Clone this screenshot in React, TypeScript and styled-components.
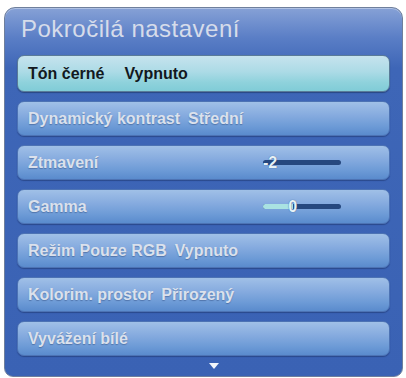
import React from 'react';
import styled, { createGlobalStyle, css } from 'styled-components';

type Item = {
  label: string;
  value?: string;
  gap?: number;
  slider?: { text: string; pos: number; fill: boolean };
};

const items: Item[] = [
  { label: 'Tón černé', value: 'Vypnuto', gap: 20 },
  { label: 'Dynamický kontrast', value: 'Střední', gap: 8 },
  { label: 'Ztmavení', slider: { text: '-2', pos: 9, fill: false } },
  { label: 'Gamma', slider: { text: '0', pos: 38, fill: true } },
  { label: 'Režim Pouze RGB', value: 'Vypnuto', gap: 8 },
  { label: 'Kolorim. prostor', value: 'Přirozený', gap: 8 },
  { label: 'Vyvážení bílé' },
];

const App: React.FC = () => {
  return (
    <>
      <GlobalStyle />
      <Page>
        <Panel>
          <Title>Pokročilá nastavení</Title>
          <List>
            {items.map((item, i) => (
              <Row key={item.label} $active={i === 0}>
                <Label>{item.label}</Label>
                {item.value && <Value style={{ marginLeft: item.gap }}>{item.value}</Value>}
                {item.slider && (
                  <Slider>
                    <Track>
                      {item.slider.fill && <Fill style={{ width: `${item.slider.pos}%` }} />}
                    </Track>
                    <Knob style={{ left: `${item.slider.pos}%` }}>{item.slider.text}</Knob>
                  </Slider>
                )}
              </Row>
            ))}
          </List>
          <More>
            <Arrow />
          </More>
        </Panel>
      </Page>
    </>
  );
};

const GlobalStyle = createGlobalStyle`
  html, body {
    margin: 0;
    background: #ffffff;
  }
  body {
    font-family: "Liberation Sans", Arial, sans-serif;
  }
`;

const Page = styled.div`
  padding: 7px 0 0 4px;
`;

const Panel = styled.div`
  box-sizing: border-box;
  width: 399px;
  height: 370px;
  border: 1px solid #6f7f9c;
  border-radius: 11px 11px 9px 9px;
  background: linear-gradient(180deg, #86a1d6 0px, #5a7ec6 30px, #3e66b7 60px, #3a62b4 100%);
  box-shadow: inset 0 1px 0 rgba(255, 255, 255, 0.35);
  display: flex;
  flex-direction: column;
`;

const Title = styled.div`
  padding: 7px 0 0 16px;
  margin-bottom: 12px;
  font-size: 24px;
  line-height: 28px;
  letter-spacing: 0.5px;
  color: #d6dcea;
  white-space: nowrap;
`;

const List = styled.div`
  display: flex;
  flex-direction: column;
  gap: 9px;
  padding: 0 12px;
`;

const activeRow = css`
  height: 37px;
  color: #121820;
  background: linear-gradient(180deg, #c6e3ee 0%, #acdbe6 45%, #8fd2dc 75%, #80ccd7 100%);
  border: 1px solid #5a7b98;
  box-shadow: 0 1px 1px rgba(20, 40, 80, 0.5);
`;

const normalRow = css`
  height: 35px;
  color: #dbe1ec;
  text-shadow: 0 1px 1px rgba(20, 40, 90, 0.35);
  background: linear-gradient(180deg, #a0c0e7 0%, #86abdf 40%, #6c9ad6 75%, #5a8bcd 100%);
  border: 1px solid #4d73b4;
  box-shadow: 0 1px 1px rgba(20, 40, 90, 0.45);
`;

const Row = styled.div<{ $active?: boolean }>`
  box-sizing: border-box;
  display: flex;
  align-items: center;
  padding: 0 10px;
  border-radius: 7px;
  font-size: 16px;
  font-weight: 700;
  white-space: nowrap;
  ${({ $active }) => ($active ? activeRow : normalRow)}
`;

const Label = styled.span``;

const Value = styled.span``;

const Slider = styled.div`
  position: relative;
  width: 78px;
  height: 5px;
  margin-left: auto;
  margin-right: 38px;
`;

const Track = styled.div`
  height: 5px;
  border-radius: 3px;
  background: #26487f;
  overflow: hidden;
`;

const Fill = styled.div`
  height: 100%;
  background: #a9e2e2;
`;

const Knob = styled.span`
  position: absolute;
  top: 50%;
  transform: translate(-50%, -50%);
  font-size: 16px;
  font-weight: 700;
  line-height: 16px;
  color: #e6f1f6;
  text-shadow: 0 0 1px #2a4c80;
`;

const More = styled.div`
  display: flex;
  justify-content: center;
  padding: 7px 0 0 20px;
`;

const Arrow = styled.div`
  width: 0;
  height: 0;
  border-left: 5px solid transparent;
  border-right: 5px solid transparent;
  border-top: 6px solid #f2f6fb;
`;

export default App;
